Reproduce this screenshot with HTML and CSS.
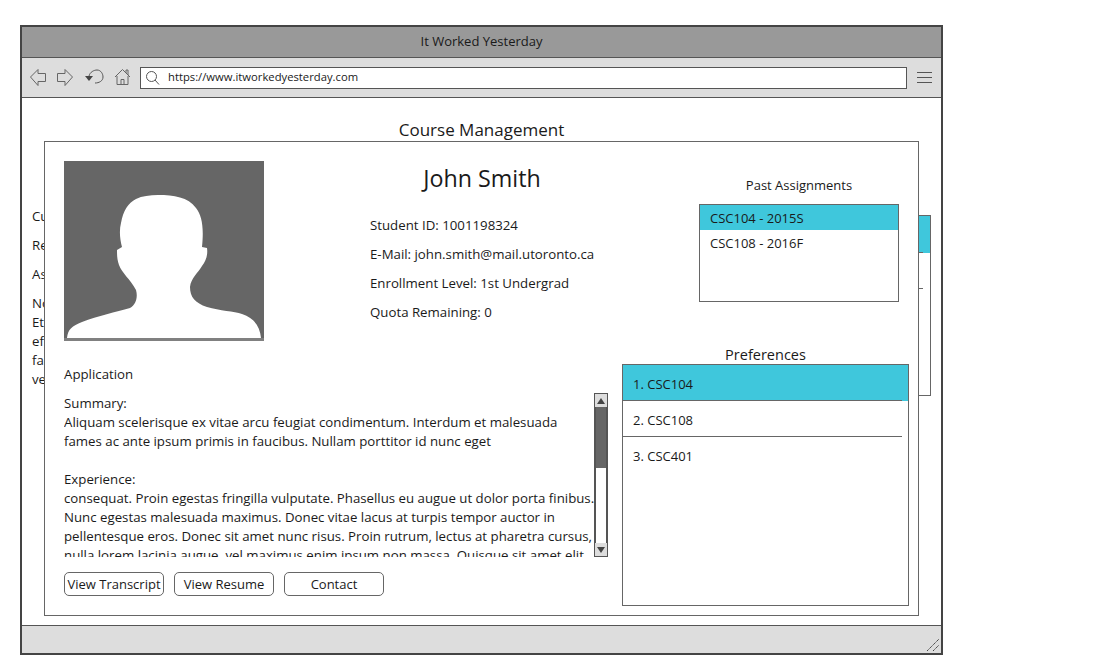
FILE: index.html

```html
<!DOCTYPE html>
<html lang="en">
<head>
  <meta charset="UTF-8" />
  <title>It Worked Yesterday</title>
  <link rel="stylesheet" href="styles.css">
</head>
<body>
  <div class="window">
    <div class="titlebar">It Worked Yesterday</div>

    <div class="toolbar">
      <svg class="nav-icons" width="108" height="20" viewBox="0 0 108 20" fill="none" stroke="#666" stroke-width="1">
        <path d="M1.5 10 L9 2.5 V6.5 H16.5 V14.5 H9 V18.5 Z" />
        <path d="M43.5 10 L36 2.5 V6.5 H28.5 V14.5 H36 V18.5 Z" />
        <path d="M60 9 C61 5 65 3 68 3 C72 3 74 7 74 10 C74 14 70 16 66 16" stroke="#555" />
        <path d="M56 9 H64 L60 14 Z" fill="#444" stroke="none" />
        <path d="M86 10 L93.5 2.5 L101 10 M88 9 V17.5 H99 V9 M92 17.5 V12.5 H95 V17.5 M97 6 V3 H99 V8" />
      </svg>
      <div class="urlbar">
        <svg class="search-icon" width="18" height="18" viewBox="0 0 18 18" fill="none" stroke="#555" stroke-width="1">
          <circle cx="7.5" cy="7.5" r="5" />
          <path d="M11 11 L15 15.5" />
        </svg>
        <span class="url-text">https://www.itworkedyesterday.com</span>
      </div>
      <div class="hamburger"><i></i><i></i><i></i></div>
    </div>

    <div class="content">
      <h2 class="page-title">Course Management</h2>
      <div class="back-row">
        <div class="back-text">
          <p>Current</p>
          <p>Requested</p>
          <p>Assigned</p>
          <p>Notes:<br>Etiam<br>efficitur<br>fames<br>vel</p>
        </div>
        <div class="back-list">
          <div class="back-item selected"></div>
          <div class="back-item"></div>
          <div class="back-item"></div>
        </div>
      </div>

      <div class="modal">
        <div class="modal-left">
          <div class="profile">
            <svg class="avatar" width="200" height="180" viewBox="0 0 200 180">
              <rect width="200" height="180" fill="#666" />
              <path fill="#fff" d="M94 34 C110 34 124 36 132 47 C138 55 140 66 138 86 L143 87 C144 94 142 100 138 105 C134 112 127 117 126 126 C126 136 131 142 143 146 C156 150 170 150 178 153 C190 157 196 165 197 177 H3 C4 168 8 165 18 161 C34 155 52 151 66 147 C72 144 74 136 72 129 C66 118 58 112 55 104 C53 98 53 94 53 89 L58 86 C56 78 55 70 57 62 C59 50 64 42 72 38 C78 35 86 34 94 34 Z" />
              <rect y="177" width="200" height="3" fill="#808080" />
            </svg>
            <div class="details">
              <h1 class="student-name">John Smith</h1>
              <p>Student ID: 1001198324</p>
              <p>E-Mail: john.smith@mail.utoronto.ca</p>
              <p>Enrollment Level: 1st Undergrad</p>
              <p>Quota Remaining: 0</p>
            </div>
          </div>

          <div class="application-title">Application</div>
          <div class="application">
            <div class="application-text">
              Summary:<br>
              Aliquam scelerisque ex vitae arcu feugiat condimentum. Interdum et malesuada<br>
              fames ac ante ipsum primis in faucibus. Nullam porttitor id nunc eget<br>
              <br>
              Experience:<br>
              consequat. Proin egestas fringilla vulputate. Phasellus eu augue ut dolor porta finibus.<br>
              Nunc egestas malesuada maximus. Donec vitae lacus at turpis tempor auctor in<br>
              pellentesque eros. Donec sit amet nunc risus. Proin rutrum, lectus at pharetra cursus,<br>
              nulla lorem lacinia augue, vel maximus enim ipsum non massa. Quisque sit amet elit
            </div>
            <div class="scrollbar">
              <div class="scroll-btn"><b class="arrow-up"></b></div>
              <div class="scroll-track"><div class="scroll-thumb"></div></div>
              <div class="scroll-btn"><b class="arrow-down"></b></div>
            </div>
          </div>

          <div class="actions">
            <button class="btn">View Transcript</button>
            <button class="btn">View Resume</button>
            <button class="btn">Contact</button>
          </div>
        </div>

        <div class="modal-right">
          <div class="past">
            <div class="past-title">Past Assignments</div>
            <div class="past-list">
              <div class="past-item selected">CSC104 - 2015S</div>
              <div class="past-item">CSC108 - 2016F</div>
            </div>
          </div>
          <div class="pref-title">Preferences</div>
          <div class="pref-list">
            <div class="pref-item selected">1. CSC104</div>
            <div class="pref-item">2. CSC108</div>
            <div class="pref-item">3. CSC401</div>
          </div>
        </div>
      </div>
    </div>

    <div class="statusbar">
      <svg class="grip" width="12" height="13" viewBox="0 0 12 13" stroke="#444" stroke-width="1" stroke-dasharray="1.5 0.5">
        <path d="M0 13 L12 1 M6 13 L12 7" />
      </svg>
    </div>
  </div>
</body>
</html>
```

FILE: styles.css

```css
body {
  margin: 0;
  font-family: 'Open Sans', sans-serif;
  font-size: 13.25px;
  color: #1a1a1a;
  background: #fff;
  overflow: hidden;
}
.window {
  position: relative;
  width: 919px;
  height: 626px;
  margin: 25px 0 0 20px;
  border: 2px solid #444;
  display: flex;
  flex-direction: column;
}
.titlebar {
  height: 30px;
  background: #999;
  border-bottom: 1px solid #555;
  text-align: center;
  line-height: 29px;
  font-size: 13px;
  flex: none;
}
.toolbar {
  height: 39px;
  background: #ddd;
  border-bottom: 1px solid #555;
  display: flex;
  align-items: center;
  flex: none;
}
.nav-icons {
  margin: 0 3px 1px 7px;
  flex: none;
}
.urlbar {
  width: 765px;
  height: 20px;
  border: 1px solid #555;
  background: #fff;
  display: flex;
  align-items: center;
  font-size: 11.25px;
  flex: none;
}
.search-icon {
  margin: 0 6px 0 3px;
}
.url-text {
  margin-bottom: 2px;
}
.hamburger {
  margin-left: 10px;
  width: 15px;
  display: flex;
  flex-direction: column;
  gap: 4px;
}
.hamburger i {
  display: block;
  height: 1px;
  background: #555;
}
.content {
  position: relative;
  flex: 1;
  padding: 0 10px;
  overflow: hidden;
}
.page-title {
  margin: 21px 0 0;
  font-size: 17px;
  font-weight: normal;
  line-height: 22px;
  text-align: center;
}
.back-row {
  display: flex;
  justify-content: space-between;
  margin-top: 74px;
}
.back-text {
  line-height: 19px;
  white-space: nowrap;
  margin-top: -8px;
}
.back-text p {
  margin: 0 0 10px;
}
.back-list {
  width: 308px;
  height: 179px;
  border: 1px solid #666;
}
.back-item {
  position: relative;
  height: 36px;
}
.back-item::after {
  content: "";
  position: absolute;
  left: 0;
  right: 7px;
  bottom: 0;
  height: 1px;
  background: #666;
}
.back-item.selected {
  background: #3fc7dc;
  height: 37px;
}
.back-item:last-child::after {
  display: none;
}

/* dialog sits over the page */
.modal {
  position: absolute;
  left: 22px;
  top: 43px;
  width: 845px;
  height: 434px;
  padding: 19px 9px 20px 19px;
  background: #fff;
  border: 1px solid #666;
  display: flex;
  gap: 14px;
}
.modal-left {
  width: 544px;
  flex: none;
}
.profile {
  display: flex;
  height: 180px;
}
.avatar {
  flex: none;
  display: block;
}
.details {
  margin-left: 106px;
  width: 230px;
  flex: none;
}
.details p {
  margin: 0;
  height: 29px;
  line-height: 29px;
  white-space: nowrap;
}
.student-name {
  width: 224px;
  margin: 0 0 14px;
  height: 36px;
  line-height: 34px;
  font-size: 23.25px;
  font-weight: normal;
  text-align: center;
  white-space: nowrap;
}
.application-title {
  margin-top: 24px;
  height: 19px;
  line-height: 19px;
}
.application {
  display: flex;
  margin-top: 9px;
  height: 164px;
}
.application-text {
  width: 530px;
  height: 164px;
  overflow: hidden;
  line-height: 19px;
  white-space: nowrap;
  padding-top: 1px;
  box-sizing: border-box;
}
.scrollbar {
  width: 14px;
  flex: none;
  box-sizing: border-box;
  border: 1px solid #555;
  background: #fff;
  display: flex;
  flex-direction: column;
}
.scroll-btn {
  height: 13px;
  background: #ddd;
  display: flex;
  align-items: center;
  justify-content: center;
  flex: none;
}
.arrow-up {
  border: 4px solid transparent;
  border-top: none;
  border-bottom: 6px solid #444;
}
.arrow-down {
  border: 4px solid transparent;
  border-bottom: none;
  border-top: 6px solid #444;
}
.scroll-track {
  flex: 1;
  border-left: 1px solid #555;
  border-right: 1px solid #555;
}
.scroll-thumb {
  height: 61px;
  background: #666;
}
.actions {
  display: flex;
  gap: 10px;
  margin-top: 15px;
}
.btn {
  width: 100px;
  height: 24px;
  padding: 0;
  font: inherit;
  font-size: 13px;
  color: inherit;
  background: #fff;
  border: 1px solid #666;
  border-radius: 5px;
  white-space: nowrap;
}
.modal-right {
  width: 287px;
  flex: none;
}
.past {
  margin-left: 77px;
  width: 200px;
}
.past-title {
  margin-top: 14px;
  height: 20px;
  line-height: 20px;
  font-size: 13px;
  text-align: center;
}
.past-list {
  margin-top: 9px;
  height: 96px;
  border: 1px solid #666;
}
.past-item {
  height: 25px;
  line-height: 27px;
  padding-left: 10px;
  font-size: 13px;
}
.past-item.selected,
.pref-item.selected {
  background: #3fc7dc;
}
.pref-title {
  margin-top: 43px;
  height: 19px;
  line-height: 20px;
  font-size: 14.5px;
  text-align: center;
}
.pref-list {
  height: 240px;
  border: 1px solid #666;
}
.pref-item {
  position: relative;
  height: 36px;
  line-height: 38px;
  padding-left: 10px;
  font-size: 13px;
}
.pref-item::after {
  content: "";
  position: absolute;
  left: 0;
  right: 6px;
  bottom: 0;
  height: 1px;
  background: #666;
}
.pref-item:last-child::after {
  display: none;
}
.statusbar {
  flex: none;
  height: 27px;
  background: #ddd;
  border-top: 1px solid #555;
  display: flex;
  justify-content: flex-end;
  align-items: flex-end;
}
.grip {
  display: block;
  margin: 0 2px 2px 0;
}
```
